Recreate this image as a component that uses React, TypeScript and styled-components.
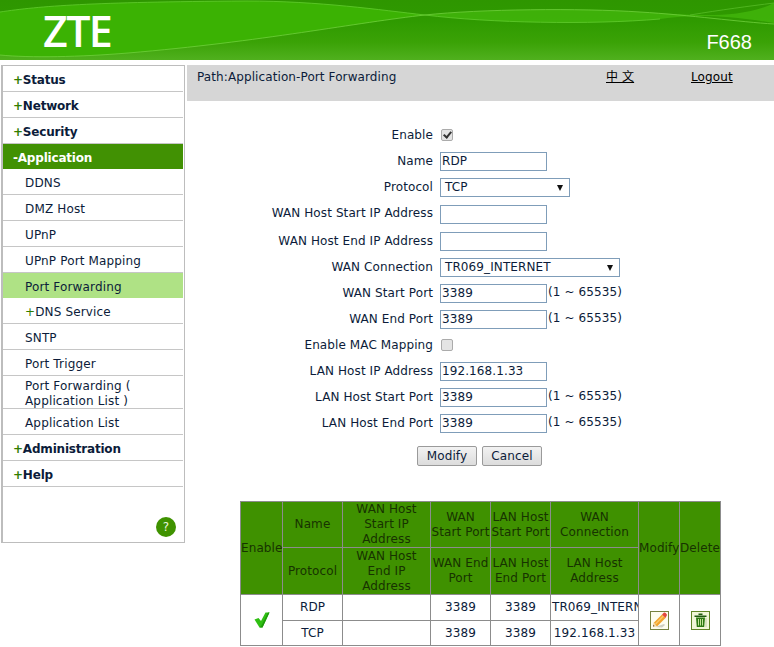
import React from 'react';
import styled, { createGlobalStyle } from 'styled-components';

const GlobalStyle = createGlobalStyle`
  html, body {
    margin: 0;
    padding: 0;
    height: 647px;
    overflow: hidden;
    background: #fff;
    font-family: "DejaVu Sans", Verdana, sans-serif;
    font-size: 12px;
    letter-spacing: 0.1px;
    color: #0c1c3a;
  }
`;

const Header = styled.div`
  position: relative;
  height: 60px;
  overflow: hidden;
  background: linear-gradient(180deg, #2e9600 0%, #2f9a00 35%, #3aa206 70%, #50b01e 100%);
`;

const Waves = styled.svg`
  position: absolute;
  inset: 0;
`;

const Logo = styled.div`
  position: absolute;
  left: 43px;
  top: 6px;
  font-family: "Open Sans", sans-serif;
  font-weight: 600;
  font-size: 43px;
  letter-spacing: -1.6px;
  line-height: 50px;
  color: #fff;
`;

const Model = styled.div`
  position: absolute;
  right: 22px;
  top: 29px;
  font-family: "Liberation Sans", Arial, sans-serif;
  font-size: 20px;
  letter-spacing: 0;
  line-height: 26px;
  color: #fff;
`;

const Body = styled.div`
  display: flex;
  align-items: flex-start;
  padding-top: 5px;
  gap: 2px;
`;

const Side = styled.div`
  width: 180px;
  height: 476px;
  margin-left: 1px;
  padding-right: 1px;
  border: 1px solid #bdbdbd;
  border-left-width: 2px;
  position: relative;
`;

const itemHeight = (tall?: boolean, kind?: string) => {
  if (tall) return '33px';
  return kind ? '25px' : '26px';
};

const Item = styled.div<{ $tall?: boolean; $top?: boolean; $kind?: 'open' | 'selected'; $pad?: number }>`
  box-sizing: border-box;
  height: ${(p) => itemHeight(p.$tall, p.$kind)};
  display: flex;
  align-items: center;
  padding-left: ${(p) => (p.$top ? '10px' : '22px')};
  padding-top: ${(p) => p.$pad ?? 4}px;
  font-weight: ${(p) => (p.$top ? 700 : 400)};
  letter-spacing: ${(p) => (p.$top ? '-0.2px' : '0.15px')};
  line-height: 15px;
  border-bottom: 1px solid ${(p) => (p.$kind ? 'transparent' : '#c6c6c6')};
  background: ${(p) =>
    p.$kind === 'open' ? '#419103' : p.$kind === 'selected' ? '#afe285' : 'transparent'};
  color: ${(p) => (p.$kind === 'open' ? '#fff' : '#0c1c3a')};
`;

const Plus = styled.span<{ $thin?: boolean }>`
  color: #2f7d00;
  font-weight: ${(p) => (p.$thin ? 400 : 700)};
`;

const Help = styled.div`
  position: absolute;
  right: 8px;
  bottom: 5px;
  width: 20px;
  height: 20px;
  border-radius: 50%;
  background: #3f9200;
  color: #e8f5dc;
  font-size: 12px;
  display: flex;
  align-items: center;
  justify-content: center;
`;

const Main = styled.div`
  flex: 1;
  min-width: 0;
`;

const PathBar = styled.div`
  height: 36px;
  box-sizing: border-box;
  background: #d6d6d6;
  display: flex;
  padding: 5px 0 0 10px;
  line-height: 15px;
`;

const PathText = styled.div`
  width: 409px;
`;

const BarLink = styled.a<{ $wide?: boolean }>`
  color: #000;
  text-decoration: underline;
  width: ${(p) => (p.$wide ? '85px' : 'auto')};
  font-family: "DejaVu Sans", "Noto Sans CJK SC", sans-serif;
`;

const Form = styled.div`
  display: grid;
  grid-template-columns: 246px auto;
  justify-content: start;
  column-gap: 7px;
  padding-top: 21px;
`;

const Label = styled.div<{ $h?: number }>`
  text-align: right;
  height: ${(p) => p.$h ?? 26}px;
  line-height: 26px;
  white-space: nowrap;
`;

const Field = styled.div<{ $h?: number }>`
  height: ${(p) => p.$h ?? 26}px;
  display: flex;
  align-items: center;
  gap: 1px;
`;

const Hint = styled.span`
  margin-bottom: 2px;
`;

const TextInput = styled.input`
  box-sizing: border-box;
  width: 107px;
  height: 19px;
  padding: 0 1px;
  border: 1px solid #7f9db9;
  font: inherit;
  letter-spacing: inherit;
  color: #0c1c3a;
  outline: none;
`;

const Select = styled.div<{ $w: number }>`
  box-sizing: border-box;
  width: ${(p) => p.$w}px;
  height: 19px;
  border: 1px solid #7f9db9;
  padding: 0 0 0 4px;
  line-height: 17px;
  position: relative;
  color: #0c1c3a;
  &::after {
    content: '';
    position: absolute;
    right: 6px;
    top: 6px;
    border-left: 3.5px solid transparent;
    border-right: 3.5px solid transparent;
    border-top: 6px solid #111;
  }
`;

const Check = styled.input`
  appearance: none;
  box-sizing: border-box;
  margin: 0 0 0 1px;
  width: 12px;
  height: 12px;
  border: 1px solid #ababab;
  border-radius: 2px;
  background: #e4e4e4;
  position: relative;
  &:checked::after {
    content: '';
    position: absolute;
    left: 3px;
    top: 0;
    width: 3px;
    height: 6px;
    border: solid #333;
    border-width: 0 2px 2px 0;
    transform: rotate(40deg);
  }
`;

const Buttons = styled.div`
  display: flex;
  gap: 5px;
  padding: 10px 0 0 230px;
`;

const Button = styled.button`
  box-sizing: border-box;
  height: 20px;
  width: 60px;
  padding: 0;
  border: 1px solid #9a9a9a;
  border-radius: 2px;
  background: linear-gradient(180deg, #f2f2f2, #dcdcdc);
  font: inherit;
  letter-spacing: inherit;
  color: #0c1c3a;
`;

const TableWrap = styled.div`
  padding: 35px 0 0 53px;
`;

const Table = styled.table`
  border-collapse: collapse;
  table-layout: fixed;
  width: 480px;
  text-align: center;
  line-height: 15px;
  td, th {
    border: 1px solid #8c8c8c;
    padding: 0;
    font-weight: 400;
    overflow: hidden;
  }
  th {
    background: #3f9100;
    color: #173300;
  }
`;

const Clip = styled.div`
  white-space: nowrap;
  overflow: hidden;
  text-align: left;
  padding-left: 1px;
`;

const Row = styled.tr<{ $h: number }>`
  height: ${(p) => p.$h}px;
`;

const IconSvg = styled.svg`
  display: block;
  margin: 0 auto;
`;

function Pencil() {
  return (
    <IconSvg width="19" height="19" viewBox="0 0 19 19">
      <rect x="0.5" y="0.5" width="18" height="18" fill="#fdfdf0" stroke="#76823f" />
      <path d="M5 16l9-3 1 1-3 2.5z" fill="#cfcfc0" />
      <path d="M3 15.5l1-4 8-8 3.5 3.5-8 8z" fill="#f2a42c" />
      <path d="M5 12.5l8-8 1 1-8 8z" fill="#fbc96a" />
      <path d="M12 3.5l1.5-1.5c.8-.6 1.6-.5 2.2.1l.8.8c.6.7.6 1.4 0 2L15.5 7z" fill="#e2483f" />
      <path d="M3 15.5l1-4 2.5 3.5z" fill="#f1dcb0" />
      <path d="M3 15.5l.4-1.6 1.2 1.2z" fill="#4a3020" />
    </IconSvg>
  );
}

function Trash() {
  return (
    <IconSvg width="19" height="19" viewBox="0 0 19 19">
      <rect x="0.5" y="0.5" width="18" height="18" fill="#f1f7d8" stroke="#5f8526" />
      <path d="M7.5 2.5h4v1.5h-4zM3.5 4.5h12V6h-12z" fill="#1f5a10" />
      <path d="M5 6.5h9l-.8 9.5H5.8z" fill="#2c7a12" />
      <path d="M7.5 8v6.5M9.5 8v6.5M11.5 8v6.5" stroke="#c4e49a" strokeWidth="1" />
      <path d="M14 7h2v9h-2z" fill="#c8d4b0" opacity="0.6" />
    </IconSvg>
  );
}

function Tick() {
  return (
    <IconSvg width="16" height="16" viewBox="0 0 16 16">
      <path d="M0.5 7.5L4.5 6l2.5 3L11.5 0.5H15.5L8.5 15.5H5.5z" fill="#2fbf12" />
      <path d="M5.5 15.5l3 0L15.5 0.5l-1.5 0L7.5 13.5z" fill="#1f9a0c" />
    </IconSvg>
  );
}

export default function App() {
  return (
    <>
      <GlobalStyle />
      <Header>
        <Waves width="774" height="60" viewBox="0 0 774 60">
          <path d="M0 12C40 6 90 2 246 1C320 1 380 10 425 15C360 22 260 42 128 53C80 57 30 58 0 55z" fill="#3bb203" />
          <path d="M425 15C480 9 580 8 640 12C690 15 740 20 774 3V23C720 14 690 15 660 19C590 25 490 23 425 15z" fill="#44b80c" opacity="0.75" />
          <path d="M0 12C40 6 90 2 246 1C320 1 380 10 425 15C490 23 590 25 660 19" stroke="#62cc2e" strokeWidth="1" fill="none" opacity="0.8" />
          <path d="M0 55C30 58 80 57 128 53C260 42 360 22 425 15C480 9 580 8 640 12C690 15 740 22 774 24" stroke="#6fd03c" strokeWidth="1" fill="none" opacity="0.8" />
          <path d="M690 15C720 10 750 6 774 3" stroke="#5cc02c" strokeWidth="1" fill="none" opacity="0.7" />
        </Waves>
        <Logo>ZTE</Logo>
        <Model>F668</Model>
      </Header>
      <Body>
        <Side>
          <Item $top $pad={3}><Plus>+</Plus>Status</Item>
          <Item $top $pad={3}><Plus>+</Plus>Network</Item>
          <Item $top $pad={3}><Plus>+</Plus>Security</Item>
          <Item $top $pad={5} $kind="open">-Application</Item>
          <Item>DDNS</Item>
          <Item>DMZ Host</Item>
          <Item>UPnP</Item>
          <Item>UPnP Port Mapping</Item>
          <Item $kind="selected">Port Forwarding</Item>
          <Item><Plus $thin>+</Plus>DNS Service</Item>
          <Item>SNTP</Item>
          <Item>Port Trigger</Item>
          <Item $tall>Port Forwarding (<br />Application List )</Item>
          <Item>Application List</Item>
          <Item $top><Plus>+</Plus>Administration</Item>
          <Item $top><Plus>+</Plus>Help</Item>
          <Help>?</Help>
        </Side>
        <Main>
          <PathBar>
            <PathText>Path:Application-Port Forwarding</PathText>
            <BarLink $wide>中 文</BarLink>
            <BarLink>Logout</BarLink>
          </PathBar>
          <Form>
            <Label>Enable</Label>
            <Field><Check type="checkbox" defaultChecked /></Field>
            <Label>Name</Label>
            <Field><TextInput defaultValue="RDP" /></Field>
            <Label>Protocol</Label>
            <Field><Select $w={130}>TCP</Select></Field>
            <Label $h={28}>WAN Host Start IP Address</Label>
            <Field $h={28}><TextInput /></Field>
            <Label>WAN Host End IP Address</Label>
            <Field><TextInput /></Field>
            <Label>WAN Connection</Label>
            <Field><Select $w={180}>TR069_INTERNET</Select></Field>
            <Label>WAN Start Port</Label>
            <Field><TextInput defaultValue="3389" /><Hint>(1 ~ 65535)</Hint></Field>
            <Label>WAN End Port</Label>
            <Field><TextInput defaultValue="3389" /><Hint>(1 ~ 65535)</Hint></Field>
            <Label>Enable MAC Mapping</Label>
            <Field><Check type="checkbox" /></Field>
            <Label>LAN Host IP Address</Label>
            <Field><TextInput defaultValue="192.168.1.33" /></Field>
            <Label>LAN Host Start Port</Label>
            <Field><TextInput defaultValue="3389" /><Hint>(1 ~ 65535)</Hint></Field>
            <Label>LAN Host End Port</Label>
            <Field><TextInput defaultValue="3389" /><Hint>(1 ~ 65535)</Hint></Field>
          </Form>
          <Buttons>
            <Button>Modify</Button>
            <Button>Cancel</Button>
          </Buttons>
          <TableWrap>
            <Table>
              <colgroup>
                <col style={{ width: 42 }} />
                <col style={{ width: 60 }} />
                <col style={{ width: 88 }} />
                <col style={{ width: 60 }} />
                <col style={{ width: 60 }} />
                <col style={{ width: 88 }} />
                <col style={{ width: 41 }} />
                <col style={{ width: 41 }} />
              </colgroup>
              <tbody>
                <Row $h={46}>
                  <th rowSpan={2}>Enable</th>
                  <th>Name</th>
                  <th>WAN Host<br />Start IP<br />Address</th>
                  <th>WAN<br />Start Port</th>
                  <th>LAN Host<br />Start Port</th>
                  <th>WAN<br />Connection</th>
                  <th rowSpan={2}>Modify</th>
                  <th rowSpan={2}>Delete</th>
                </Row>
                <Row $h={47}>
                  <th>Protocol</th>
                  <th>WAN Host<br />End IP<br />Address</th>
                  <th>WAN End<br />Port</th>
                  <th>LAN Host<br />End Port</th>
                  <th>LAN Host<br />Address</th>
                </Row>
                <Row $h={26}>
                  <td rowSpan={2}><Tick /></td>
                  <td>RDP</td>
                  <td></td>
                  <td>3389</td>
                  <td>3389</td>
                  <td><Clip>TR069_INTERNET</Clip></td>
                  <td rowSpan={2}><Pencil /></td>
                  <td rowSpan={2}><Trash /></td>
                </Row>
                <Row $h={25}>
                  <td>TCP</td>
                  <td></td>
                  <td>3389</td>
                  <td>3389</td>
                  <td>192.168.1.33</td>
                </Row>
              </tbody>
            </Table>
          </TableWrap>
        </Main>
      </Body>
    </>
  );
}
